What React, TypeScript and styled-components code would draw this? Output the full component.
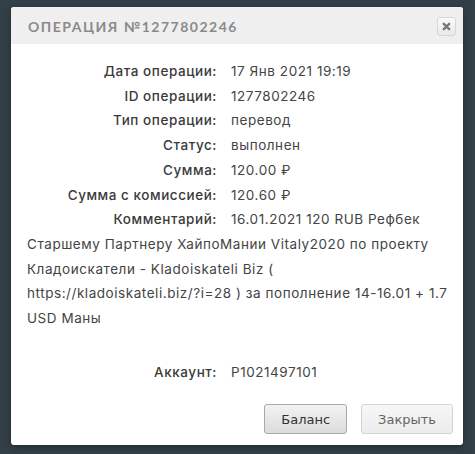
import styled, { createGlobalStyle } from "styled-components";

const GlobalStyle = createGlobalStyle`
  html, body {
    margin: 0;
    padding: 0;
    background: #333f47;
  }
`;

const Page = styled.div`
  width: 475px;
  height: 454px;
  padding: 7px 12px 0 11px;
  box-sizing: border-box;
  background: #333f47;
`;

const Dialog = styled.div`
  width: 452px;
  height: 438px;
  background: #ffffff;
  border-radius: 3px;
  box-shadow: 0 2px 6px rgba(0, 0, 0, 0.35);
  display: flex;
  flex-direction: column;
  overflow: hidden;
  font-family: Inter, "Noto Sans", sans-serif;
`;

const Header = styled.div`
  height: 37px;
  background: #efefef;
  display: flex;
  align-items: center;
  justify-content: space-between;
  padding: 0 7px 0 17px;
`;

const Title = styled.div`
  font-family: Lato, "DejaVu Sans", sans-serif;
  font-weight: 700;
  font-size: 14px;
  letter-spacing: 1.5px;
  color: #8a8a8a;
  padding-top: 1px;
`;

const CloseButton = styled.button`
  width: 19px;
  height: 19px;
  padding: 0;
  border: 1px solid #d6d6d6;
  border-radius: 3px;
  background: linear-gradient(#fafafa, #e9e9e9);
  display: flex;
  align-items: center;
  justify-content: center;
  margin-top: 2px;
`;

const Body = styled.div`
  flex: 1;
  padding: 15px 8px 0 16px;
  font-size: 13.5px;
  letter-spacing: 0.55px;
  line-height: 24.7px;
  color: #333;
`;

const Row = styled.div<{ $gapTop?: boolean }>`
  margin-top: ${(p) => (p.$gapTop ? "29px" : "0")};
`;

const Label = styled.span`
  display: inline-block;
  width: 190px;
  margin-right: 14px;
  text-align: right;
  font-weight: 500;
  color: #3a3a3a;
`;

const Value = styled.span`
  color: #444;
`;

const Link = styled.span`
  white-space: nowrap;
`;

const Footer = styled.div`
  display: flex;
  justify-content: flex-end;
  gap: 14px;
  padding: 0 10px 11px 0;
`;

const Button = styled.button<{ $muted?: boolean }>`
  height: 30px;
  padding: 0 16px;
  font-family: "DejaVu Sans", Verdana, sans-serif;
  font-size: 13px;
  color: ${(p) => (p.$muted ? "#666" : "#333")};
  border: 1px solid ${(p) => (p.$muted ? "#d4d4d4" : "#a9a9a9")};
  border-radius: 3px;
  background: ${(p) =>
    p.$muted
      ? "linear-gradient(#f7f7f7, #ececec)"
      : "linear-gradient(#f3f3f3, #dcdcdc)"};
`;

const rows = [
  ["Дата операции:", "17 Янв 2021 19:19"],
  ["ID операции:", "1277802246"],
  ["Тип операции:", "перевод"],
  ["Статус:", "выполнен"],
  ["Сумма:", "120.00 ₽"],
  ["Сумма с комиссией:", "120.60 ₽"],
];

const App = () => {
  return (
    <Page>
      <GlobalStyle />
      <Dialog>
        <Header>
          <Title>ОПЕРАЦИЯ №1277802246</Title>
          <CloseButton>
            <svg width="9" height="9" viewBox="0 0 10 10">
              <path
                d="M2 2 L8 8 M8 2 L2 8"
                stroke="#777"
                strokeWidth="2.6"
                strokeLinecap="round"
              />
            </svg>
          </CloseButton>
        </Header>
        <Body>
          {rows.map(([label, value]) => (
            <Row key={label}>
              <Label>{label}</Label>
              <Value>{value}</Value>
            </Row>
          ))}
          <Row>
            <Label>Комментарий:</Label>
            <Value>
              16.01.2021 120 RUB Рефбек Старшему Партнеру ХайпоМании Vitaly2020
              по проекту Кладоискатели - Kladoiskateli Biz ({" "}
              <Link>https://kladoiskateli.biz/?i=28</Link> ) за пополнение
              14-16.01 + 1.7 USD Маны
            </Value>
          </Row>
          <Row $gapTop>
            <Label>Аккаунт:</Label>
            <Value>P1021497101</Value>
          </Row>
        </Body>
        <Footer>
          <Button>Баланс</Button>
          <Button $muted>Закрыть</Button>
        </Footer>
      </Dialog>
    </Page>
  );
};

export default App;
